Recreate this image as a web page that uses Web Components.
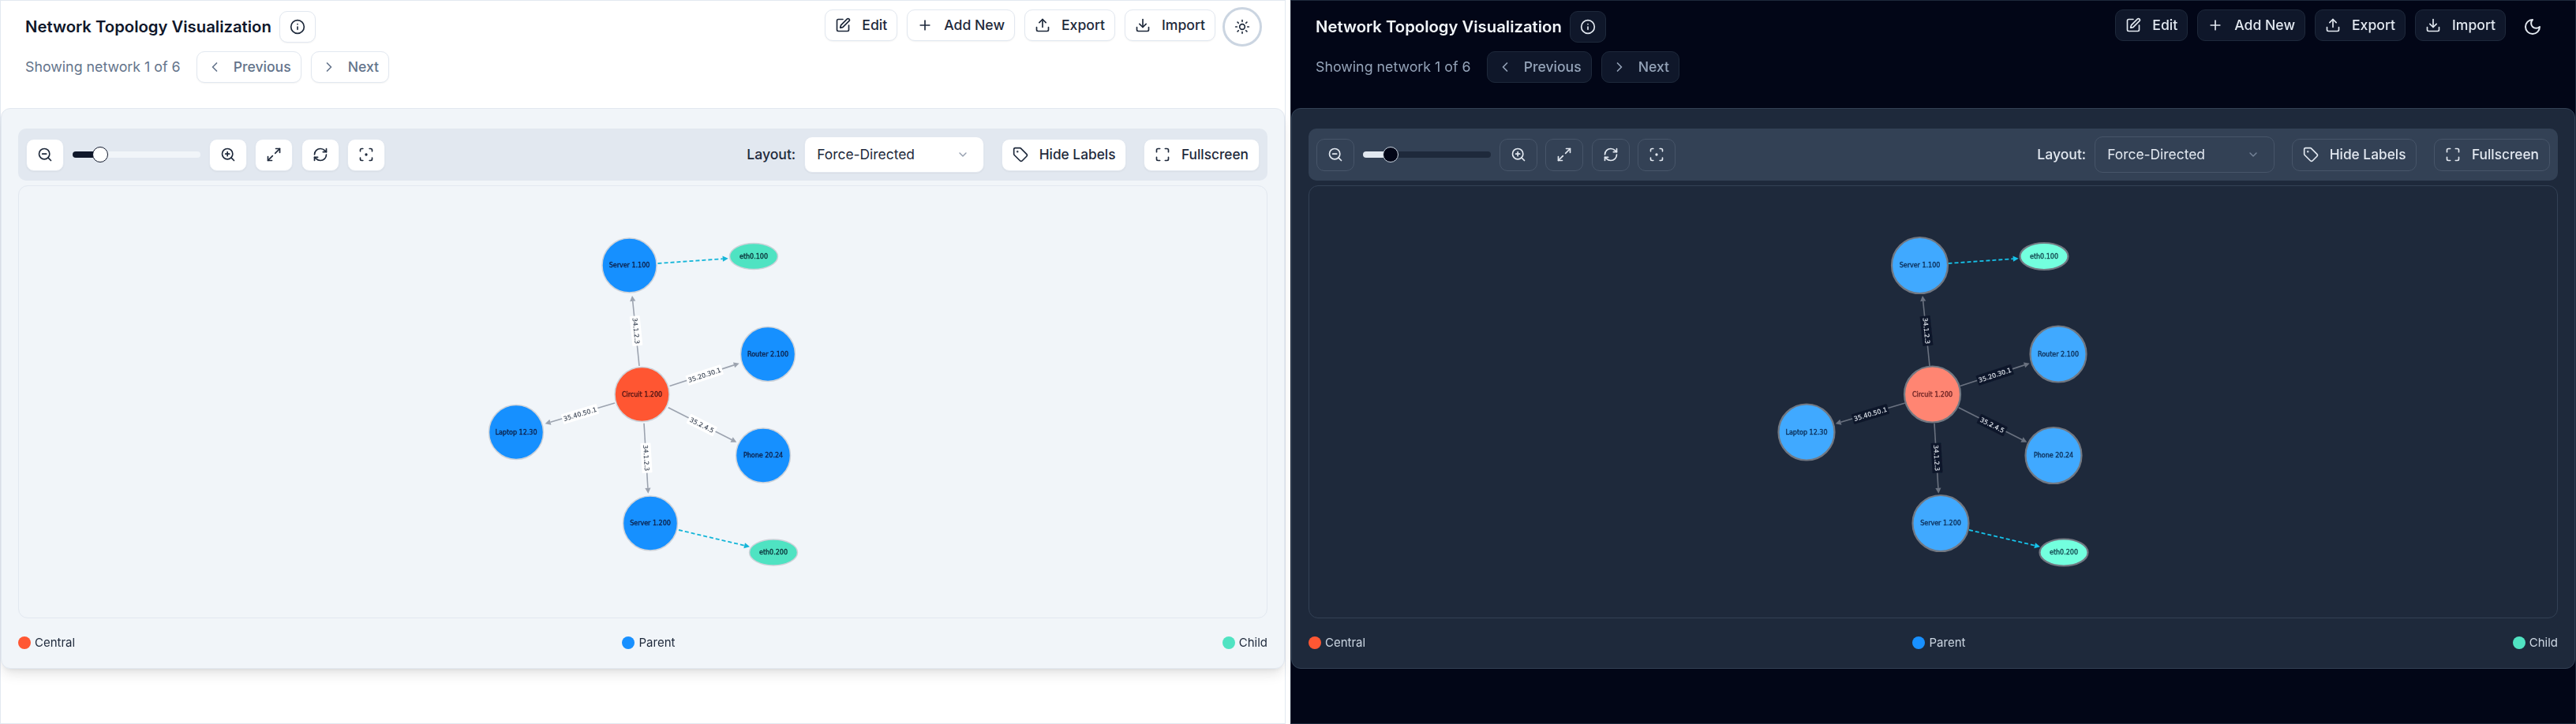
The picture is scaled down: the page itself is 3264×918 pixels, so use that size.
<!doctype html>
<html><head><meta charset="utf-8">
<style>
html,body{margin:0;padding:0;background:#fff}
body{width:3264px;height:918px;overflow:hidden;font-family:Inter,"Liberation Sans",sans-serif}
#split{display:grid;grid-template-columns:1629px 1629px;column-gap:6px;width:3264px;height:918px}
</style>
</head><body>
<div id="split">
<topo-pane theme="light"></topo-pane>
<topo-pane theme="dark"></topo-pane>
</div>
<script>
const ICONS={
info:'<circle cx="12" cy="12" r="10"/><path d="M12 16v-4"/><path d="M12 8h.01"/>',
left:'<path d="m15 18-6-6 6-6"/>',
right:'<path d="m9 18 6-6-6-6"/>',
edit:'<path d="M12 3H5a2 2 0 0 0-2 2v14a2 2 0 0 0 2 2h14a2 2 0 0 0 2-2v-7"/><path d="M18.375 2.625a1 1 0 0 1 3 3l-9.013 9.014a2 2 0 0 1-.853.505l-2.873.84a.5.5 0 0 1-.62-.62l.84-2.873a2 2 0 0 1 .506-.852z"/>',
plus:'<path d="M5 12h14"/><path d="M12 5v14"/>',
upload:'<path d="M21 15v4a2 2 0 0 1-2 2H5a2 2 0 0 1-2-2v-4"/><polyline points="17 8 12 3 7 8"/><line x1="12" x2="12" y1="3" y2="15"/>',
download:'<path d="M21 15v4a2 2 0 0 1-2 2H5a2 2 0 0 1-2-2v-4"/><polyline points="7 10 12 15 17 10"/><line x1="12" x2="12" y1="15" y2="3"/>',
sun:'<circle cx="12" cy="12" r="4"/><path d="M12 2v2"/><path d="M12 20v2"/><path d="m4.93 4.93 1.41 1.41"/><path d="m17.66 17.66 1.41 1.41"/><path d="M2 12h2"/><path d="M20 12h2"/><path d="m6.34 17.66-1.41 1.41"/><path d="m19.07 4.93-1.41 1.41"/>',
moon:'<path d="M12 3a6 6 0 0 0 9 9 9 9 0 1 1-9-9Z"/>',
zoomout:'<circle cx="11" cy="11" r="8"/><line x1="21" x2="16.65" y1="21" y2="16.65"/><line x1="8" x2="14" y1="11" y2="11"/>',
zoomin:'<circle cx="11" cy="11" r="8"/><line x1="21" x2="16.65" y1="21" y2="16.65"/><line x1="11" x2="11" y1="8" y2="14"/><line x1="8" x2="14" y1="11" y2="11"/>',
arrows:'<path d="M15 3h6v6"/><path d="m21 3-7 7"/><path d="m3 21 7-7"/><path d="M9 21H3v-6"/>',
refresh:'<path d="M3 12a9 9 0 0 1 9-9 9.75 9.75 0 0 1 6.74 2.74L21 8"/><path d="M21 3v5h-5"/><path d="M21 12a9 9 0 0 1-9 9 9.75 9.75 0 0 1-6.74-2.74L3 16"/><path d="M8 16H3v5"/>',
focus:'<circle cx="12" cy="12" r="1"/><path d="M3 7V5a2 2 0 0 1 2-2h2"/><path d="M17 3h2a2 2 0 0 1 2 2v2"/><path d="M21 17v2a2 2 0 0 1-2 2h-2"/><path d="M7 21H5a2 2 0 0 1-2-2v-2"/>',
full:'<path d="M8 3H5a2 2 0 0 0-2 2v3"/><path d="M21 8V5a2 2 0 0 0-2-2h-3"/><path d="M3 16v3a2 2 0 0 0 2 2h3"/><path d="M16 21h3a2 2 0 0 0 2-2v-3"/>',
tag:'<path d="M12.586 2.586A2 2 0 0 0 11.172 2H4a2 2 0 0 0-2 2v7.172a2 2 0 0 0 .586 1.414l8.704 8.704a2.426 2.426 0 0 0 3.42 0l6.58-6.58a2.426 2.426 0 0 0 0-3.42z"/><circle cx="7.5" cy="7.5" r=".5" fill="currentColor"/>',
down:'<path d="m6 9 6 6 6-6"/>'
};
const svgIcon=(n,s=20,w=2)=>`<svg width="${s}" height="${s}" viewBox="0 0 24 24" fill="none" stroke="currentColor" stroke-width="${w}" stroke-linecap="round" stroke-linejoin="round">${ICONS[n]}</svg>`;

class TopoIcon extends HTMLElement{
  connectedCallback(){
    const s=+(this.getAttribute('size')||20);
    this.attachShadow({mode:'open'}).innerHTML=`<style>:host{display:inline-flex;flex:none;width:${s}px;height:${s}px}svg{display:block}</style>${svgIcon(this.getAttribute('name'),s)}`;
  }
}
customElements.define('topo-icon',TopoIcon);

class TopoButton extends HTMLElement{
  connectedCallback(){
    const icon=this.getAttribute('icon');
    const r=this.attachShadow({mode:'open'});
    r.innerHTML=`<style>
    :host{display:inline-flex;flex:none}
    button{all:unset;box-sizing:border-box;display:inline-flex;align-items:center;justify-content:center;height:var(--bh,40px);padding:0 var(--bp,12px);border-radius:10px;
      font:500 var(--bf,17.6px)/24px Inter,"Liberation Sans",sans-serif;color:var(--btn-fg);background:var(--btn-bg);border:1px solid var(--btn-bd);box-shadow:var(--btn-sh)}
    .t{margin-left:14px}
    </style><button><topo-icon name="${icon}"></topo-icon>${this.textContent.trim()?'<span class="t"><slot></slot></span>':''}</button>`;
  }
}
customElements.define('topo-button',TopoButton);

class TopoSlider extends HTMLElement{
  connectedCallback(){
    this.attachShadow({mode:'open'}).innerHTML=`<style>
    :host{display:block;flex:none;width:162.5px;height:20px;position:relative}
    .t{position:absolute;left:0;right:0;top:6px;height:8px;border-radius:4px;background:var(--track)}
    .f{position:absolute;left:0;width:36px;top:6px;height:8px;border-radius:4px 0 0 4px;background:var(--fill)}
    .h{position:absolute;left:25.7px;top:0;width:20px;height:20px;box-sizing:border-box;border-radius:50%;background:var(--thumb);border:1.5px solid var(--thumb-bd)}
    </style><div class="t"></div><div class="f"></div><div class="h"></div>`;
  }
}
customElements.define('topo-slider',TopoSlider);

class TopoSelect extends HTMLElement{
  connectedCallback(){
    this.attachShadow({mode:'open'}).innerHTML=`<style>
    :host{display:flex;flex:none;box-sizing:border-box;width:228px;height:46px;align-items:center;justify-content:space-between;padding:0 18px 0 15px;border-radius:10px;
      background:var(--sel-bg);border:1px solid var(--sel-bd);color:var(--btn-fg);font:400 17.4px/24px Inter,"Liberation Sans",sans-serif;box-shadow:var(--btn-sh)}
    .c{color:var(--chev);display:flex;opacity:.7}
    </style><slot></slot><span class="c"><topo-icon name="down" size="16"></topo-icon></span>`;
  }
}
customElements.define('topo-select',TopoSelect);

class TopoLegendItem extends HTMLElement{
  connectedCallback(){
    this.attachShadow({mode:'open'}).innerHTML=`<style>
    :host{display:inline-flex;align-items:center;gap:5px;font:400 15px/20px Inter,"Liberation Sans",sans-serif;color:var(--legend)}
    i{display:block;width:16px;height:16px;border-radius:50%;background:${this.getAttribute('color')}}
    </style><i></i><slot></slot>`;
  }
}
customElements.define('topo-legend-item',TopoLegendItem);

const NODES=[
 {t:'Server 1.100',k:'p',x:797.5,y:336.5},
 {t:'eth0.100',k:'c',x:955,y:325},
 {t:'Router 2.100',k:'p',x:973,y:449},
 {t:'Circuit 1.200',k:'r',x:813.5,y:500},
 {t:'Laptop 12.30',k:'p',x:654,y:548},
 {t:'Phone 20.24',k:'p',x:967,y:577.5},
 {t:'Server 1.200',k:'p',x:824,y:663.5},
 {t:'eth0.200',k:'c',x:980,y:700.5}
];
const EDGES=[
 {a:[810,464],b:[801,375],t:'34.1.2.3',c:[806,419.5],w:38},
 {a:[848.5,489.5],b:[936.7,460.7],t:'35.20.30.1',c:[892.7,475.5],w:47},
 {a:[779,511],b:[690.7,537.3],t:'35.40.50.1',c:[735,525],w:47},
 {a:[846.7,516.7],b:[933.3,560.7],t:'35.2.4.5',c:[889.3,539],w:38},
 {a:[816,536.7],b:[821.3,625.7],t:'34.1.2.3',c:[819,580.7],w:38},
 {a:[833.5,334],b:[922.7,327.7],dash:1},
 {a:[860,672],b:[950,693.3],dash:1}
];
class TopoGraph extends HTMLElement{
  connectedCallback(){
    const d=this.getAttribute('theme')==='dark';
    const C=d?{p:'#40a9ff',r:'#ff8572',c:'#73ffde',bd:'#727882',bw:2.2,edge:'#6b7280',dash:'#17c3ea',lb:'#0f172a',lt:'#e2e8f0',nt:'#0f3560',rt:'#702626',ct:'#174f55'}
             :{p:'#1890ff',r:'#ff5733',c:'#50e3c2',bd:'#cdd2d9',bw:1.5,edge:'#9ca3af',dash:'#12b5d8',lb:'#ffffff',lt:'#374151',nt:'#0a2550',rt:'#521616',ct:'#0c383e'};
    const R=d?35.5:34.5, RX=30.5, RY=d?17:16.5;
    let s='';
    for(const e of EDGES){
      const col=e.dash?C.dash:C.edge;
      const ang=Math.atan2(e.b[1]-e.a[1],e.b[0]-e.a[0]);
      const L=7,W=3.6;
      const bx=e.b[0]-Math.cos(ang)*L,by=e.b[1]-Math.sin(ang)*L;
      const nx=-Math.sin(ang)*W,ny=Math.cos(ang)*W;
      s+=`<line x1="${e.a[0]}" y1="${e.a[1]}" x2="${bx}" y2="${by}" stroke="${col}" stroke-width="${e.dash?1.8:1.6}" ${e.dash?'stroke-dasharray="5 3"':''}/>`;
      s+=`<polygon points="${e.b[0]},${e.b[1]} ${bx+nx},${by+ny} ${bx-nx},${by-ny}" fill="${col}"/>`;
      if(e.t){
        const deg=ang*180/Math.PI; const rot=(deg>90||deg<-90)?deg+180:deg;
        s+=`<g transform="translate(${e.c[0]} ${e.c[1]}) rotate(${rot.toFixed(1)})"><rect x="${-e.w/2}" y="-6.5" width="${e.w}" height="13" fill="${C.lb}" rx="1"/><text x="0" y="2.9" text-anchor="middle" font-size="8" fill="${C.lt}" stroke="${C.lt}" stroke-width=".12">${e.t}</text></g>`;
      }
    }
    for(const n of NODES){
      const fill=n.k==='p'?C.p:n.k==='r'?C.r:C.c;
      const tc=n.k==='r'?C.rt:n.k==='c'?C.ct:C.nt;
      s+=n.k==='c'
        ?`<ellipse cx="${n.x}" cy="${n.y}" rx="${RX}" ry="${RY}" fill="${fill}" stroke="${C.bd}" stroke-width="${C.bw}"/>`
        :`<circle cx="${n.x}" cy="${n.y}" r="${R}" fill="${fill}" stroke="${C.bd}" stroke-width="${C.bw}"/>`;
      s+=`<text x="${n.x}" y="${n.y+2.9}" text-anchor="middle" font-size="8" fill="${tc}" stroke="${tc}" stroke-width=".38">${n.t}</text>`;
    }
    this.attachShadow({mode:'open'}).innerHTML=`<style>
    :host{display:block;box-sizing:border-box;height:549px;border:1px solid var(--canvas-bd);border-radius:12px;overflow:hidden;background:var(--card)}
    svg{display:block;width:100%;height:100%;font-family:"DejaVu Sans",sans-serif}
    </style><svg viewBox="24 236 1581 547" preserveAspectRatio="xMinYMin"><defs><filter id="b" x="-5%" y="-5%" width="110%" height="110%"><feGaussianBlur stdDeviation="0.35"/></filter></defs><g filter="url(#b)">${s}</g></svg>`;
  }
}
customElements.define('topo-graph',TopoGraph);

class TopoHeader extends HTMLElement{
  connectedCallback(){
    const d=this.getAttribute('theme')==='dark';
    this.attachShadow({mode:'open'}).innerHTML=`<style>
    :host{display:flex;justify-content:space-between;align-items:flex-start;height:134px;box-sizing:border-box;padding:8px 29px 0 31px}
    .l{display:flex;flex-direction:column;gap:11px;padding-top:5px}
    .r1{display:flex;align-items:center;gap:10px;height:40px}
    h1{margin:0;font:600 20.3px/28px Inter,"Liberation Sans",sans-serif;color:var(--title)}
    .r2{display:flex;align-items:center;gap:12px;height:40px}
    .muted{font:400 17.8px/24px Inter,"Liberation Sans",sans-serif;color:var(--muted);margin-right:8px}
    .prev{--btn-fg:var(--muted)}
    .r{display:flex;align-items:flex-start;gap:9px}
    .acts{display:flex;gap:12px;margin-top:3px}
    .tg{box-sizing:border-box;width:50px;height:50px;border-radius:50%;display:flex;align-items:center;justify-content:center;color:var(--btn-fg);${d?'':'border:3px solid #cbd5e1;'}}
    </style>
    <div class="l"><div class="r1"><h1>Network Topology Visualization</h1><topo-button icon="info"></topo-button></div>
    <div class="r2"><span class="muted">Showing network 1 of 6</span><topo-button class="prev" icon="left">Previous</topo-button><topo-button class="prev" icon="right">Next</topo-button></div></div>
    <div class="r"><div class="acts"><topo-button icon="edit">Edit</topo-button><topo-button icon="plus">Add New</topo-button><topo-button icon="upload">Export</topo-button><topo-button icon="download">Import</topo-button></div>
    <div class="tg"><topo-icon name="${d?'moon':'sun'}" size="${d?24:20}"></topo-icon></div></div>`;
  }
}
customElements.define('topo-header',TopoHeader);

class TopoToolbar extends HTMLElement{
  connectedCallback(){
    this.attachShadow({mode:'open'}).innerHTML=`<style>
    :host{display:flex;align-items:center;justify-content:space-between;box-sizing:border-box;height:66px;padding:0 10px;border-radius:10px;background:var(--bar);--bh:41px;--bp:13px;--bf:17.3px;--btn-bd:var(--tb-bd);--btn-bg:var(--tb-bg)}
    .g{display:flex;align-items:center}
    .z{gap:10.5px}
    .lab{font:500 17.6px/24px Inter,"Liberation Sans",sans-serif;color:var(--btn-fg)}
    .rg{gap:21.5px}
    .sel{display:flex;align-items:center;gap:11px}
    </style>
    <div class="g z"><topo-button icon="zoomout"></topo-button><topo-slider></topo-slider><topo-button icon="zoomin"></topo-button><topo-button icon="arrows"></topo-button><topo-button icon="refresh"></topo-button><topo-button icon="focus"></topo-button></div>
    <div class="g rg"><div class="sel"><span class="lab">Layout:</span><topo-select>Force-Directed</topo-select></div><topo-button icon="tag">Hide Labels</topo-button><topo-button icon="full">Fullscreen</topo-button></div>`;
  }
}
customElements.define('topo-toolbar',TopoToolbar);

class TopoPane extends HTMLElement{
  connectedCallback(){
    const d=this.getAttribute('theme')==='dark';
    const vars=d?`--bg:#020617;--bd:#1e293b;--card:#1e293b;--card-bd:#334155;--bar:#334155;--title:#f1f5f9;--muted:#94a3b8;--btn-fg:#e2e8f0;--btn-bg:#0f172a;--btn-bd:#1e293b;--btn-sh:none;--tb-bg:#334155;--tb-bd:#475569;--sel-bg:#334155;--sel-bd:#475569;--chev:#94a3b8;--canvas-bd:#334155;--legend:#cbd5e1;--track:#1e293b;--fill:#e2e8f0;--thumb:#020617;--thumb-bd:#cbd5e1;--shadow:none`
      :`--bg:#fff;--bd:#e2e8f0;--card:#f1f5f9;--card-bd:#e2e8f0;--bar:#e2e8f0;--title:#0f172a;--muted:#64748b;--btn-fg:#1e293b;--btn-bg:#fff;--btn-bd:#e2e8f0;--btn-sh:0 1px 2px rgba(0,0,0,.05);--tb-bg:#fff;--tb-bd:#e2e8f0;--sel-bg:#fff;--sel-bd:#e2e8f0;--chev:#64748b;--canvas-bd:#e2e8f0;--legend:#1e293b;--track:#f1f5f9;--fill:#0f172a;--thumb:#fff;--thumb-bd:#0f172a;--shadow:0 10px 15px -3px rgba(0,0,0,.1),0 4px 6px -4px rgba(0,0,0,.1)`;
    const t=this.getAttribute('theme');
    this.attachShadow({mode:'open'}).innerHTML=`<style>
    :host{display:block;box-sizing:border-box;width:1629px;height:918px;border:1px solid var(--bd);background:var(--bg);${vars}}
    .card{box-sizing:border-box;height:711px;background:var(--card);border:1px solid var(--card-bd);border-radius:12px;box-shadow:var(--shadow);padding:25px 21px 0 21px;margin-top:2px}
    .gap{height:6px}
    .leg{display:flex;justify-content:space-between;align-items:center;height:62px}
    </style>
    <topo-header theme="${t}"></topo-header>
    <div class="card"><topo-toolbar></topo-toolbar><div class="gap"></div><topo-graph theme="${t}"></topo-graph>
    <div class="leg"><topo-legend-item color="#ff5733">Central</topo-legend-item><topo-legend-item color="#1890ff">Parent</topo-legend-item><topo-legend-item color="#50e3c2">Child</topo-legend-item></div></div>`;
  }
}
customElements.define('topo-pane',TopoPane);
</script>
</body></html>
